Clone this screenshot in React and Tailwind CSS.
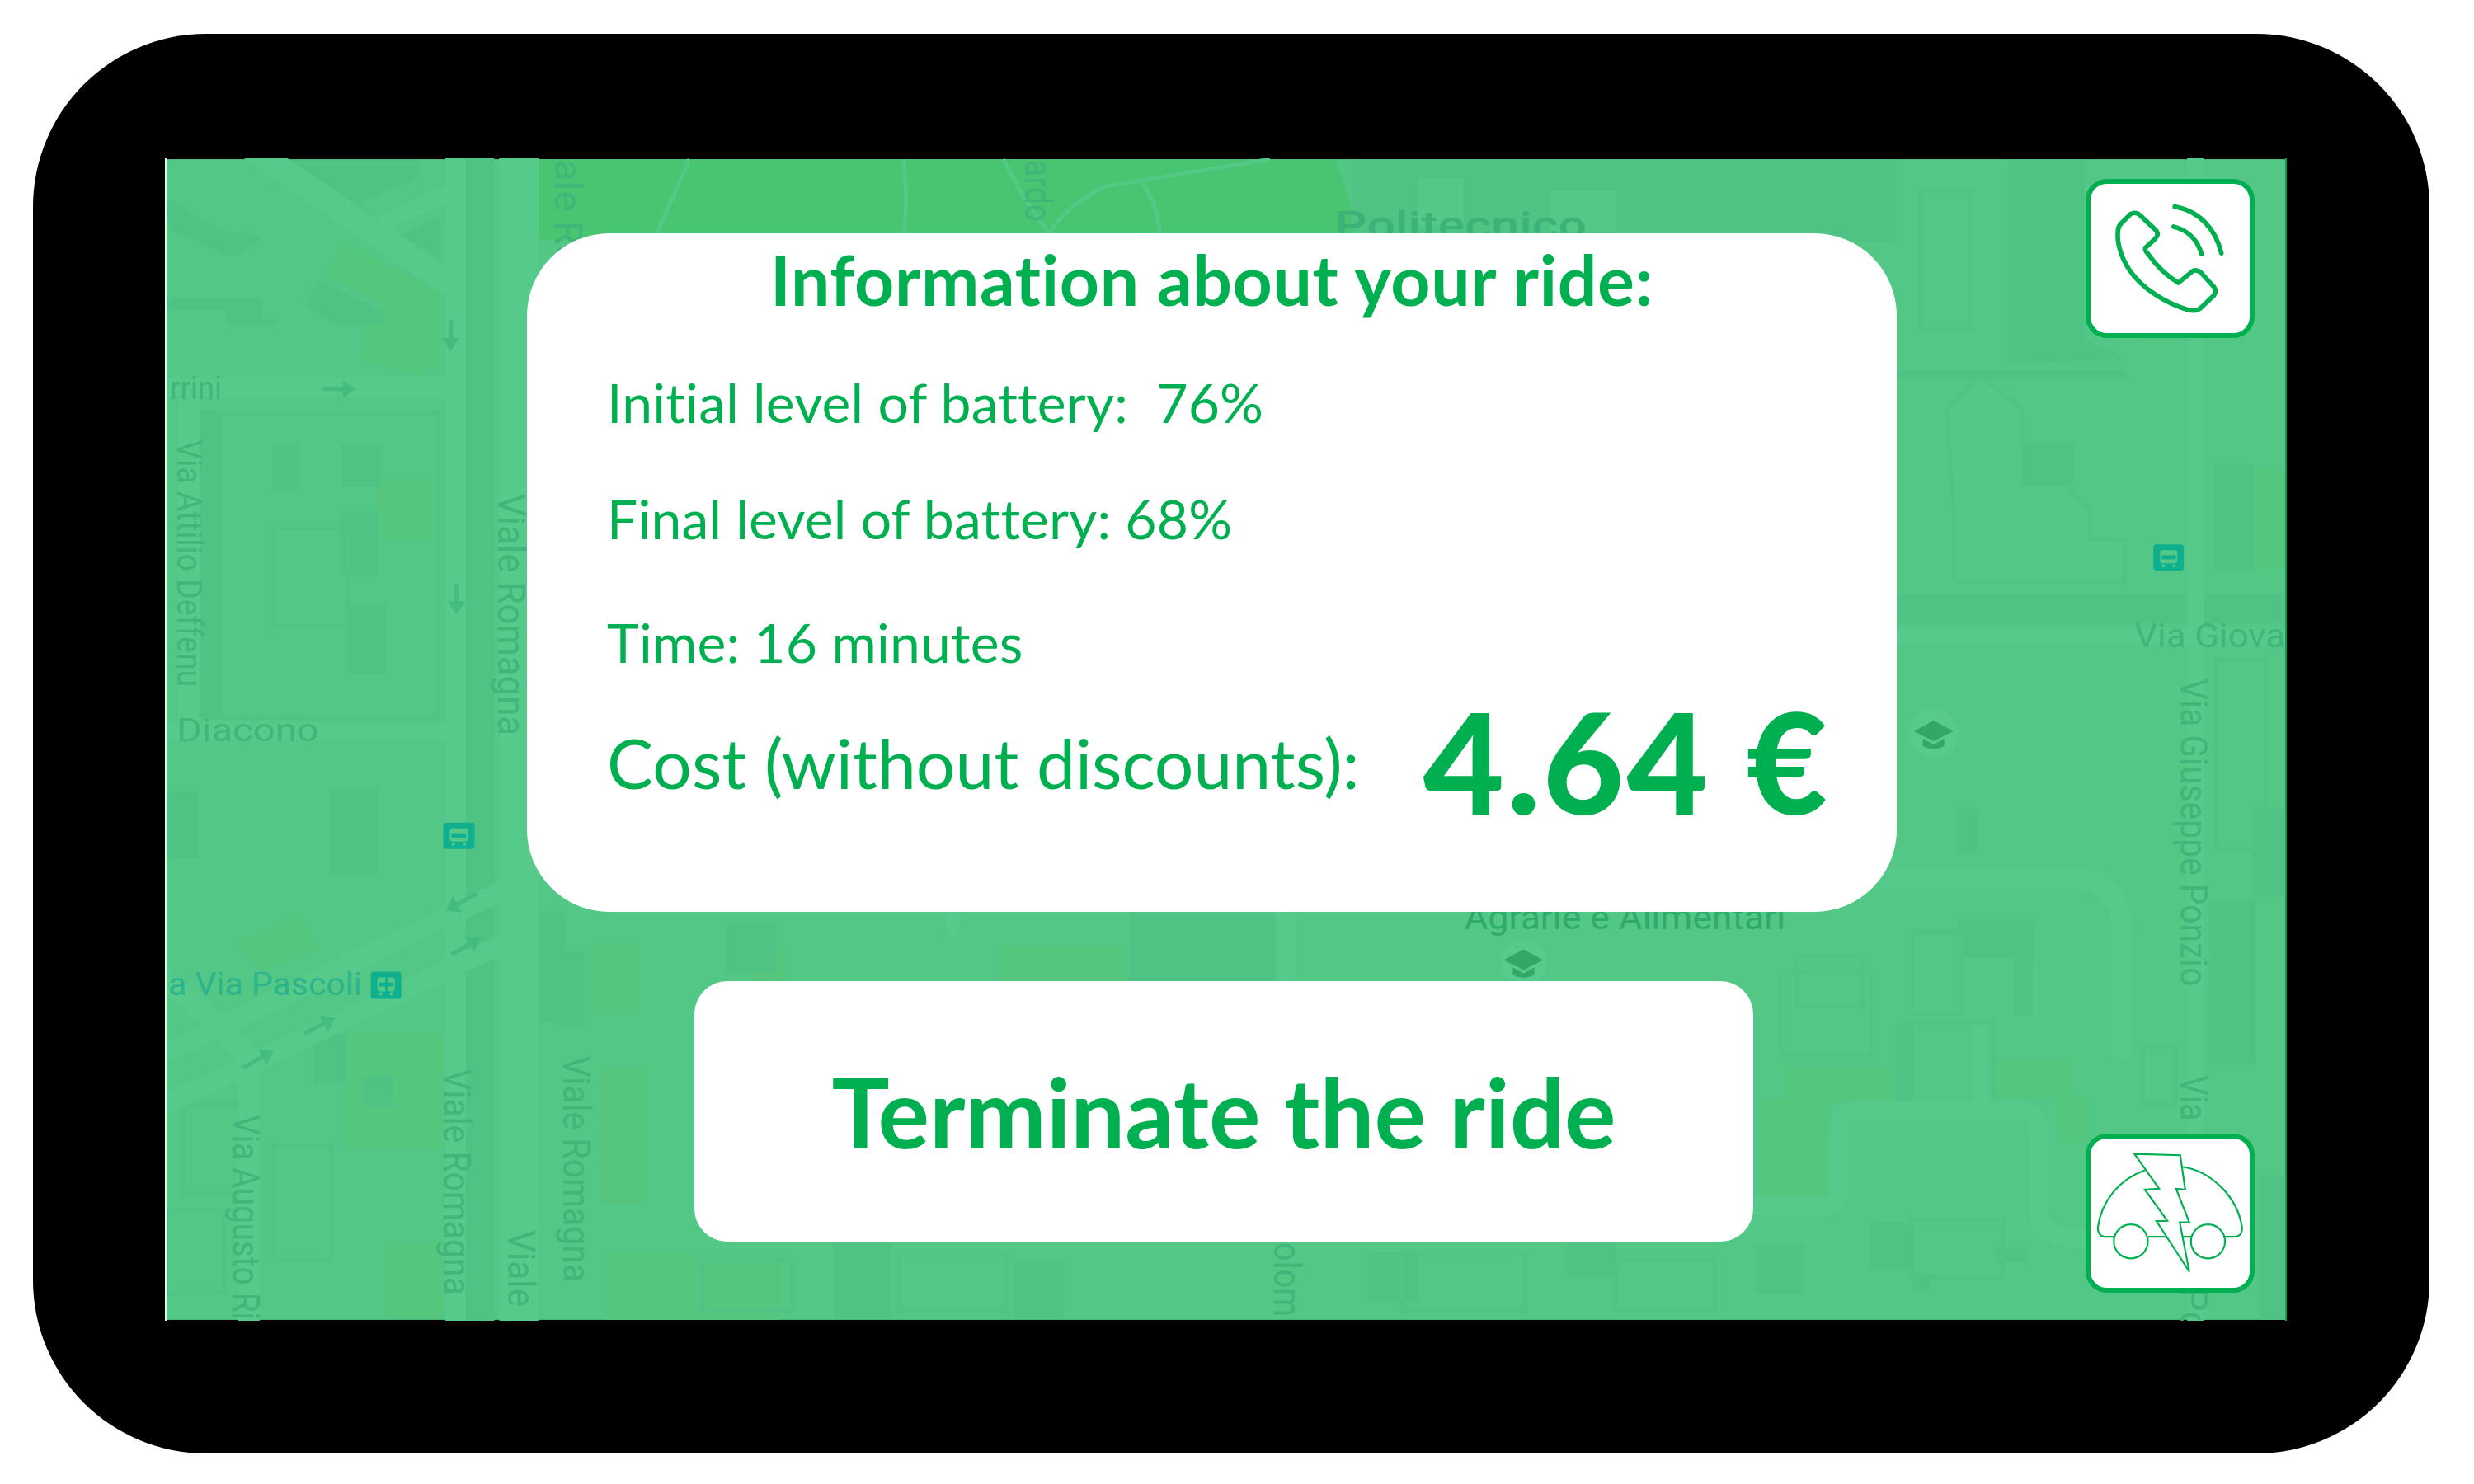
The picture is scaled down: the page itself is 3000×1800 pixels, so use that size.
const GREEN = "#00b050";

// [x, y, w, h] in page pixels; the map svg viewBox starts at the map's corner
const darkBlocks = [
  [1640, 192, 660, 92], [2238, 192, 62, 100], [328, 540, 32, 53], [413, 540, 47, 50], [410, 620, 47, 77],
  [420, 733, 47, 84], [240, 497, 27, 373], [202, 961, 36, 80], [399, 957, 58, 103], [379, 1254, 38, 61],
  [439, 1306, 36, 37], [653, 1107, 31, 133], [671, 1155, 36, 90], [1370, 1107, 176, 83], [2373, 980, 26, 56],
  [2300, 1243, 21, 95], [2378, 1117, 91, 44], [2443, 1161, 23, 72], [2681, 1092, 56, 201], [2733, 980, 39, 108],
  [2742, 1426, 30, 176], [2269, 1484, 52, 58], [2321, 1546, 20, 21], [2421, 1514, 39, 18], [2453, 537, 63, 51],
  [2686, 563, 49, 127], [2300, 720, 469, 36], [2300, 448, 280, 12], [558, 180, 40, 1430], [880, 1120, 60, 60],
  [1010, 1510, 70, 90], [1230, 1530, 60, 70], [1660, 1520, 60, 60], [1900, 1510, 60, 40], [2130, 1510, 60, 60],
];

const greenBlocks = [
  [457, 580, 63, 73], [417, 1254, 120, 141], [466, 1508, 71, 92], [718, 1145, 60, 85], [727, 1296, 56, 165],
  [733, 1522, 109, 80], [1211, 1148, 154, 42], [915, 1150, 38, 40], [800, 1527, 145, 75], [2167, 1297, 128, 41],
  [2137, 1333, 80, 121], [2423, 1285, 93, 48], [2499, 1333, 35, 53], [2735, 570, 37, 120],
];

const outlines = [
  [257, 500, 273, 370], [330, 640, 90, 120], [2330, 230, 60, 170], [2160, 1180, 110, 100], [2320, 1130, 60, 100],
  [2310, 1240, 110, 100], [2600, 1270, 40, 70], [2320, 1480, 110, 70], [850, 1530, 110, 60], [1090, 1520, 130, 70],
  [1700, 1520, 150, 70], [1960, 1530, 120, 60], [2180, 1160, 80, 60], [220, 1340, 80, 110], [200, 1470, 70, 100],
  [330, 1390, 70, 140], [2600, 230, 60, 180], [2690, 800, 60, 230],
];

const darkShapes = [
  "357,193 507,193 507,213 446,240 424,247 330,193",
  "484,285 533,262 533,313",
  "203,240 263,277 317,287 290,308 268,308 237,290 210,283 200,260",
  "384,340 464,377 464,393 406,393 370,370",
  "200,362 316,362 316,387 333,387 333,393 273,393 273,375 200,375",
  "2437,192 2529,192 2529,410 2580,435 2437,440",
];

const lightBuildings = [
  "2362,496 2404,455 2453,496 2453,537 2536,619 2536,654 2578,654 2578,705 2371,705 2371,629",
];

const roads = [
  { d: "M290 170 L545 345", w: 30 },
  { d: "M460 270 L545 232", w: 20 },
  { d: "M180 469 L545 469", w: 24 },
  { d: "M180 887 L545 887", w: 22 },
  { d: "M227 470 L227 887", w: 26 },
  { d: "M551 170 L551 1620", w: 25 },
  { d: "M628 170 L628 1620", w: 48 },
  { d: "M180 1349 L640 1130", w: 24 },
  { d: "M180 1287 L640 1065", w: 24 },
  { d: "M180 1172 L290 1270 Q300 1290 300 1340 L300 1620", w: 26 },
  { d: "M2290 1066 L2510 1066 Q2575 1066 2575 1130 L2575 1273", w: 24, cap: "round" },
  { d: "M2110 1464 L2212 1464 Q2232 1464 2232 1440 L2232 1370 Q2232 1348 2255 1348 L2450 1348 Q2473 1348 2473 1370 L2473 1470 Q2473 1503 2530 1503", w: 22 },
  { d: "M2403 1348 L2403 1253", w: 20, cap: "round" },
  { d: "M2664 170 L2664 1620", w: 20 },
  { d: "M2290 772 L2790 772", w: 20 },
  { d: "M1560 1100 L1560 1200", w: 22 },
  { d: "M1155 1100 L1155 1130", w: 16, cap: "round" },
];

const parkLines = [
  "M835 192 L795 283",
  "M1095 192 Q1100 230 1096 283",
  "M1216 192 Q1240 240 1272 283",
  "M1272 283 Q1290 250 1340 225 L1540 192",
  "M1385 220 Q1405 250 1406 283",
];

const labels = [
  { text: "rrini", x: 204, y: 483, size: 38, len: 63 },
  { text: "Via Attilio Deffenu", x: 213, y: 533, size: 42, len: 300, rot: true },
  { text: "Diacono", x: 212, y: 899, size: 39, len: 173 },
  { text: "Viale Romagna", x: 603, y: 598, size: 46, len: 294, rot: true },
  { text: "ale Ro", x: 672, y: 193, size: 46, len: 130, rot: true },
  { text: "ardo", x: 1243, y: 193, size: 46, len: 75, rot: true },
  { text: "Politecnico", x: 1619, y: 288, size: 46, len: 306, weight: 500, fill: "#3cb278" },
  { text: "Via Giova", x: 2590, y: 785, size: 40, len: 183 },
  { text: "Via Giuseppe Ponzio", x: 2646, y: 823, size: 46, len: 374, rot: true },
  { text: "Via", x: 2646, y: 1305, size: 46, len: 55, rot: true },
  { text: "Po", x: 2646, y: 1562, size: 46, len: 56, rot: true },
  { text: "a Via Pascoli", x: 202, y: 1207, size: 38, len: 235, fill: "#2db48b" },
  { text: "Via Augusto Ri", x: 280, y: 1353, size: 46, len: 249, rot: true },
  { text: "Viale Romagna", x: 537, y: 1297, size: 46, len: 275, rot: true },
  { text: "Viale Romagna", x: 682, y: 1281, size: 46, len: 275, rot: true },
  { text: "Viale", x: 615, y: 1493, size: 46, len: 93, rot: true },
  { text: "Agrarie e Alimentari", x: 1776, y: 1127, size: 40, len: 390, fill: "#2fab6b" },
  { text: "olom", x: 1545, y: 1508, size: 46, len: 90, rot: true },
];

const arrows = [
  [388, 471, 430, 471], [552, 708, 552, 745], [545, 387, 545, 425], [577, 1084, 539, 1105],
  [546, 1158, 582, 1138], [367, 1254, 405, 1235], [292, 1296, 330, 1275],
];

function TransitBadge({ x, y, w, h, tram }) {
  return (
    <g>
      <rect x={x} y={y} width={w} height={h} rx="4" fill="#0eb08f" />
      <rect x={x + 8} y={y + 7} width={w - 16} height={h - 16} rx="3" fill="#53c887" />
      <rect x={x + 10} y={y + 13} width={w - 20} height={5} fill="#0eb08f" />
      {tram && <rect x={x + w / 2 - 1} y={y + 7} width="3" height={h - 16} fill="#0eb08f" />}
      <circle cx={x + 12} cy={y + h - 6} r="2" fill="#53c887" />
      <circle cx={x + w - 12} cy={y + h - 6} r="2" fill="#53c887" />
    </g>
  );
}

function SchoolPin({ cx, cy, r }) {
  return (
    <g>
      <circle cx={cx} cy={cy} r={r} fill="#58cb8c" />
      <path d={`M${cx} ${cy - 16} L${cx + 24} ${cy - 3} L${cx} ${cy + 9} L${cx - 24} ${cy - 3} Z`} fill="#33a766" />
      <path d={`M${cx - 13} ${cy + 6} L${cx} ${cy + 13} L${cx + 13} ${cy + 6} L${cx + 13} ${cy + 15} Q${cx} ${cy + 22} ${cx - 13} ${cy + 15} Z`} fill="#33a766" />
    </g>
  );
}

function MapBackground() {
  return (
    <svg viewBox="200 192 2573 1410" className="absolute inset-0 w-full h-full font-[Roboto,sans-serif]">
      <rect x="200" y="192" width="2573" height="1410" fill="#52c786" />
      <path d="M648 192 L1619 192 Q1640 240 1645 290 L648 290 Z" fill="#48c570" />
      {parkLines.map((d) => (
        <path key={d} d={d} fill="none" stroke="#53c887" strokeWidth="5" />
      ))}
      {greenBlocks.map(([x, y, w, h]) => (
        <rect key={`${x}-${y}`} x={x} y={y} width={w} height={h} fill="#54c67d" />
      ))}
      <polygon points="283,1145 363,1107 385,1150 318,1178" fill="#54c67d" />
      <polygon points="415,290 531,353 531,440 504,453 440,437 440,397 464,370 393,330" fill="#54c67d" />
      {darkBlocks.map(([x, y, w, h]) => (
        <rect key={`${x}-${y}`} x={x} y={y} width={w} height={h} fill="#4fc384" />
      ))}
      {darkShapes.map((p) => (
        <polygon key={p} points={p} fill="#4fc384" />
      ))}
      {outlines.map(([x, y, w, h]) => (
        <rect key={`${x}-${y}`} x={x} y={y} width={w} height={h} fill="none" stroke="#4fc485" strokeWidth="5" />
      ))}
      {lightBuildings.map((p) => (
        <polygon key={p} points={p} fill="#53c887" stroke="#4fc485" strokeWidth="5" />
      ))}
      <rect x="2453" y="537" width="63" height="51" fill="#4fc384" />
      <rect x="1720" y="215" width="55" height="60" fill="#53c887" />
      <rect x="1880" y="230" width="80" height="50" fill="#53c887" />
      {roads.map((r) => (
        <path key={r.d} d={r.d} fill="none" stroke="#56ca8b" strokeWidth={r.w} strokeLinecap={r.cap || "butt"} />
      ))}
      {arrows.map(([x1, y1, x2, y2]) => {
        const a = (Math.atan2(y2 - y1, x2 - x1) * 180) / Math.PI;
        const len = Math.hypot(x2 - x1, y2 - y1);
        return (
          <g key={`${x1}-${y1}`} transform={`translate(${x1} ${y1}) rotate(${a})`}>
            <path d={`M0 -2.5 H${len - 16} V-11 L${len} 0 L${len - 16} 11 V2.5 H0 Z`} fill="#44bc80" />
          </g>
        );
      })}
      {labels.map((l) => (
        <text
          key={`${l.text}-${l.x}`}
          x={l.rot ? 0 : l.x}
          y={l.rot ? 0 : l.y}
          transform={l.rot ? `translate(${l.x} ${l.y}) rotate(90)` : undefined}
          fontSize={l.size}
          fontWeight={l.weight || 400}
          fill={l.fill || "#40b67a"}
          textLength={l.len}
          lengthAdjust="spacingAndGlyphs"
        >
          {l.text}
        </text>
      ))}
      <TransitBadge x={448} y={1179} w={37} h={33} tram />
      <TransitBadge x={536} y={998} w={38} h={32} />
      <TransitBadge x={2613} y={660} w={37} h={32} />
      <SchoolPin cx={2346} cy={890} r={30} />
      <SchoolPin cx={1848} cy={1168} r={28} />
    </svg>
  );
}

function PhoneIcon() {
  return (
    <svg viewBox="105 130 580 542" className="block w-full h-full" fill="none" stroke={GREEN} strokeWidth="17" strokeLinecap="round" strokeLinejoin="round">
      <path d="M265 235 Q277 235 285 243 L345 300 Q355 315 340 330 L305 362 Q300 370 315 385 Q360 450 425 490 L480 445 Q490 442 505 450 L555 505 Q565 520 555 535 L505 583 Q490 595 460 588 C380 565 290 510 245 440 C215 395 200 340 205 300 Q205 285 218 272 L250 240 Q258 235 265 235 Z" />
      <path d="M412 212 C500 228 560 290 582 382" />
      <path d="M408 285 C460 297 495 335 510 385" />
    </svg>
  );
}

function CarIcon() {
  return (
    <svg viewBox="105 93 580 542" className="block w-full h-full" fill="none" stroke={GREEN} strokeWidth="6.5" strokeLinejoin="miter">
      <path d="M190 450 L155 450 Q130 445 132 415 C145 320 210 240 303 208" />
      <path d="M440 195 C540 210 640 300 657 415 Q660 450 625 450 L595 450" />
      <path d="M315 450 L378 450 M440 450 L472 450" />
      <circle cx="252" cy="467" r="62" />
      <circle cx="533" cy="467" r="62" />
      <polygon points="265,148 432,153 450,278 417,275 465,397 430,397 465,577 345,393 385,392 303,278 355,275" />
    </svg>
  );
}

function IconButton({ children }) {
  return (
    <button className="w-[205px] h-[193px] bg-white border-[6px] border-[#00b050] rounded-[26px] overflow-hidden">
      {children}
    </button>
  );
}

export default function App() {
  return (
    <div className="w-[3000px] h-[1800px] bg-white pt-[41px] pl-[40px] font-[Lato,sans-serif] text-[#00b050]">
      <div className="w-[2906px] h-[1722px] bg-black rounded-[210px] pt-[151px] pl-[160px]">
        <div className="relative w-[2573px] h-[1410px] overflow-hidden border-l-2 border-r-2 border-l-[#e4f6ec] border-r-[#0a9c50]">
          <MapBackground />
          <div className="relative flex h-full">
            <div className="ml-[437px] w-[1661px] pt-[91px]">
              <div className="h-[823px] bg-white rounded-[100px] pt-[17px]">
                <h1 className="text-center text-[84px] leading-[78px] font-bold tracking-[0.7px]">Information about your ride:</h1>
                <div className="pl-[97px] tracking-[0.2px]">
                  <p className="mt-[79px] text-[66px] leading-[61px] whitespace-pre">Initial level of battery:  76%</p>
                  <p className="mt-[80px] text-[66px] leading-[61px]">Final level of battery: 68%</p>
                  <p className="mt-[89px] text-[66px] leading-[61px]">Time: 16 minutes</p>
                </div>
                <div className="mt-[28px] pl-[97px] pr-[81px] flex justify-between items-start">
                  <span className="mt-[48px] text-[84px] leading-[79px]">Cost (without discounts):</span>
                  <span className="text-[170px] leading-[170px] font-black tracking-[3px]">4.64 €</span>
                </div>
              </div>
              <div className="mt-[84px] ml-[203px] w-[1284px] h-[316px] bg-white rounded-[40px] flex items-center justify-center">
                <span className="text-[117px] font-bold leading-none">Terminate the ride</span>
              </div>
            </div>
            <div className="ml-[229px] pt-[25px] pb-[34px] flex flex-col justify-between">
              <IconButton><PhoneIcon /></IconButton>
              <IconButton><CarIcon /></IconButton>
            </div>
          </div>
        </div>
      </div>
    </div>
  );
}
